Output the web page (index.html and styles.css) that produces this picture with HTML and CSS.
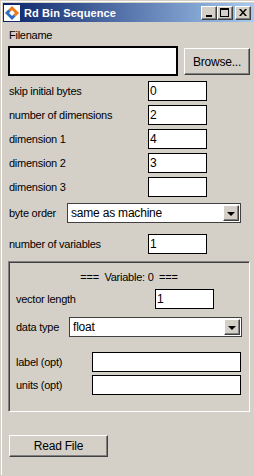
FILE: index.html
```html
<!DOCTYPE html>
<html lang="en">
<head>
	<meta charset="UTF-8">
	<title>Rd Bin Sequence</title>
	<link rel="stylesheet" href="styles.css">
</head>
<body>
	<div class="window">
		<div class="frame">
			<!-- Title bar -->
			<div class="titlebar">
				<svg class="app-icon" width="16" height="16" viewBox="0 0 16 16">
					<rect x="0" y="0" width="16" height="16" fill="#fff"/>
					<polygon points="8,1 15,8 11.5,11.5 4.5,4.5" fill="#f07818"/>
					<polygon points="8,1 4.5,4.5 8,8 1,8" fill="#f0a020"/>
					<polygon points="1,8 4.5,4.5 11.5,11.5 8,15" fill="#2e6cc0"/>
					<polygon points="8,5 11,8 8,11 5,8" fill="#fff"/>
				</svg>
				<span class="title">Rd Bin Sequence</span>
				<div class="caption-btns">
					<span class="cbtn cbtn-min"><span class="min-bar"></span></span>
					<span class="cbtn cbtn-max"><span class="max-box"></span></span>
					<span class="cbtn cbtn-close">
						<svg width="8" height="7" viewBox="0 0 8 7"><path d="M0 0h2l2 2.5 2-2.5h2L5 3.5 8 7H6L4 4.5 2 7H0l3-3.5z" fill="#000"/></svg>
					</span>
				</div>
			</div>

			<!-- Content -->
			<div class="content">
				<div class="lbl filename-lbl">Filename</div>
				<div class="file-row">
					<div class="field file-field"></div>
					<div class="btn browse-btn">Browse...</div>
				</div>

				<div class="form">
					<span class="lbl">skip initial bytes</span><span class="field num">0</span>
					<span class="lbl">number of dimensions</span><span class="field num">2</span>
					<span class="lbl">dimension 1</span><span class="field num">4</span>
					<span class="lbl">dimension 2</span><span class="field num">3</span>
					<span class="lbl">dimension 3</span><span class="field num"></span>
				</div>

				<div class="combo-row">
					<span class="lbl">byte order</span>
					<div class="combo byte-combo">
						<span class="combo-text">same as machine</span>
						<span class="combo-arrow"><span class="tri"></span></span>
					</div>
				</div>

				<div class="form vars-row">
					<span class="lbl">number of variables</span><span class="field num">1</span>
				</div>

				<!-- Variable panel -->
				<div class="panel">
					<div class="panel-title">===&nbsp; Variable: 0 &nbsp;===</div>
					<div class="panel-row vec-row">
						<span class="lbl">vector length</span><span class="field num">1</span>
					</div>
					<div class="panel-row type-row">
						<span class="lbl">data type</span>
						<div class="combo type-combo">
							<span class="combo-text">float</span>
							<span class="combo-arrow"><span class="tri"></span></span>
						</div>
					</div>
					<div class="opt-rows">
						<span class="lbl">label (opt)</span><span class="field wide"></span>
						<span class="lbl">units (opt)</span><span class="field wide"></span>
					</div>
				</div>

				<div class="btn read-btn">Read File</div>
			</div>
		</div>
	</div>
</body>
</html>
```

FILE: styles.css
```css
body {
	margin: 0;
	padding: 0;
	background-color: #d4d0c8;
	font-family: "Liberation Sans", Arial, sans-serif;
	font-size: 11px;
	color: #000;
	overflow: hidden;
}

.window {
	border-top: 1px solid #d4d0c8;
	border-left: 1px solid #d4d0c8;
	min-height: 475px;
}

.frame {
	border-top: 1px solid #fff;
	border-left: 1px solid #fff;
	padding: 1px 0 0 1px;
	min-height: 472px;
}

/* Title bar */
.titlebar {
	height: 19px;
	display: flex;
	align-items: center;
	padding: 0 3px 0 1px;
	background: linear-gradient(to right, #0a246a, #a6caf0);
}

.app-icon {
	display: block;
	flex: none;
}

.title {
	margin-left: 4px;
	color: #fff;
	font-weight: bold;
	font-size: 11px;
	letter-spacing: 0.1px;
}

.caption-btns {
	margin-left: auto;
	display: flex;
}

.cbtn {
	width: 16px;
	height: 14px;
	box-sizing: border-box;
	background-color: #d4d0c8;
	border-top: 1px solid #fff;
	border-left: 1px solid #fff;
	border-right: 1px solid #404040;
	border-bottom: 1px solid #404040;
	box-shadow: inset -1px -1px 0 #808080;
	display: flex;
	align-items: center;
	justify-content: center;
	position: relative;
}

.cbtn-close {
	margin-left: 2px;
}

.min-bar {
	width: 6px;
	height: 2px;
	background: #000;
	margin-top: 6px;
	margin-right: 1px;
}

.max-box {
	width: 9px;
	height: 9px;
	box-sizing: border-box;
	border: 1px solid #000;
	border-top-width: 2px;
	margin-right: 1px;
}

.cbtn-close svg {
	display: block;
	margin-right: 1px;
}

/* Content */
.content {
	padding: 0 4px 0 5px;
}

.lbl {
	white-space: nowrap;
	padding-left: 1px;
	letter-spacing: -0.25px;
}

.filename-lbl {
	margin-top: 6px;
	line-height: 14px;
}

.file-row {
	display: flex;
	align-items: flex-start;
	margin-top: 4px;
}

.field {
	box-sizing: border-box;
	background-color: #fff;
	border: 1px solid #000;
	height: 20px;
	line-height: 18px;
	padding-left: 1px;
	font-size: 12px;
}

.file-field {
	width: 170px;
	height: 30px;
	border: 2px solid #000;
}

.btn {
	box-sizing: border-box;
	background-color: #d4d0c8;
	border-top: 1px solid #fff;
	border-left: 1px solid #fff;
	border-right: 1px solid #404040;
	border-bottom: 1px solid #404040;
	box-shadow: inset -1px -1px 0 #808080;
	display: flex;
	align-items: center;
	justify-content: center;
	font-size: 12px;
	letter-spacing: -0.2px;
}

.browse-btn {
	margin-left: 6px;
	margin-top: 2px;
	width: 66px;
	height: 27px;
}

.form {
	display: grid;
	grid-template-columns: 140px 59px;
	grid-auto-rows: 20px;
	row-gap: 4px;
	align-items: center;
	margin-top: 5px;
}

.combo-row {
	display: flex;
	align-items: center;
	margin-top: 6px;
}

.combo-row .lbl {
	width: 58px;
}

.combo {
	box-sizing: border-box;
	height: 20px;
	background-color: #fff;
	border: 1px solid #404040;
	display: flex;
	align-items: center;
	padding: 1px;
}

.combo-text {
	flex: 1;
	padding-left: 2px;
	font-size: 12px;
	letter-spacing: -0.2px;
}

.combo-arrow {
	width: 16px;
	height: 16px;
	box-sizing: border-box;
	background-color: #d4d0c8;
	border-top: 1px solid #fff;
	border-left: 1px solid #fff;
	border-right: 1px solid #404040;
	border-bottom: 1px solid #404040;
	box-shadow: inset -1px -1px 0 #808080;
	display: flex;
	align-items: center;
	justify-content: center;
}

.tri {
	width: 0;
	height: 0;
	border-left: 4px solid transparent;
	border-right: 4px solid transparent;
	border-top: 4px solid #000;
	margin-top: 1px;
}

.byte-combo {
	width: 174px;
}

.vars-row {
	margin-top: 11px;
}

/* Variable panel */
.panel {
	margin-top: 7px;
	width: 242px;
	height: 151px;
	box-sizing: border-box;
	border-top: 1px solid #808080;
	border-left: 1px solid #808080;
	border-right: 1px solid #fff;
	border-bottom: 1px solid #fff;
	box-shadow: inset 1px 1px 0 #404040;
	padding: 0 0 0 6px;
}

.panel-title {
	text-align: center;
	margin-top: 8px;
	line-height: 14px;
	padding-right: 6px;
	letter-spacing: -0.25px;
}

.panel-row {
	display: flex;
	align-items: center;
}

.vec-row {
	margin-top: 5px;
}

.vec-row .lbl {
	width: 139px;
}

.vec-row .field {
	width: 59px;
}

.type-row {
	margin-top: 8px;
}

.type-row .lbl {
	width: 53px;
}

.type-combo {
	width: 173px;
	height: 20px;
}

.opt-rows {
	display: grid;
	grid-template-columns: 77px 149px;
	grid-auto-rows: 20px;
	row-gap: 3px;
	align-items: center;
	margin-top: 15px;
}

.read-btn {
	margin-top: 23px;
	margin-left: 1px;
	width: 99px;
	height: 22px;
}
```
